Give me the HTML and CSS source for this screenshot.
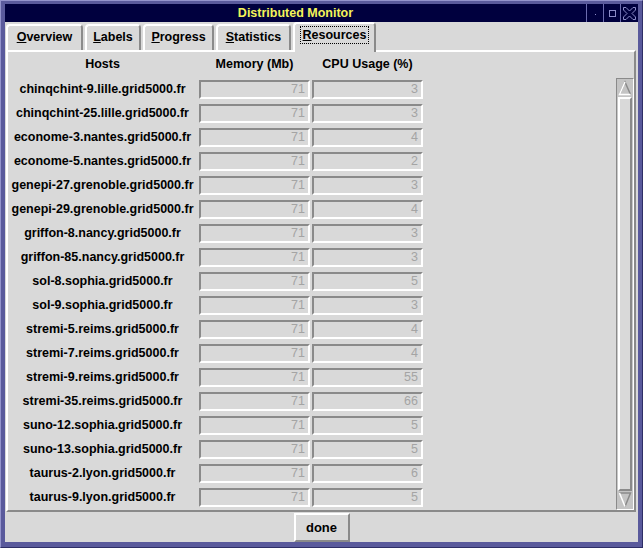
FILE: index.html
```html
<!DOCTYPE html>
<html>
<head>
<meta charset="utf-8">
<title>Distributed Monitor</title>
<link rel="stylesheet" href="styles.css">
</head>
<body>
<div class="frame">
  <div class="titlebar">
    <div class="title">Distributed Monitor</div>
    <div class="wbtn"><svg width="16" height="16" viewBox="0 0 16 16"><rect x="8" y="9" width="1" height="1" fill="#8c8cc8"/></svg></div>
    <div class="wbtn"><svg width="16" height="16" viewBox="0 0 16 16"><rect x="5.5" y="5.5" width="6" height="6" fill="none" stroke="#8c8cc8" stroke-width="1"/></svg></div>
    <div class="wbtn last"><svg width="17" height="16" viewBox="0 0 17 16"><polygon points="2.5,2.5 5,2.5 8.5,6 12,2.5 14.5,2.5 14.5,5 11,8.5 14.5,12 14.5,14.5 12,14.5 8.5,11 5,14.5 2.5,14.5 2.5,12 6,8.5 2.5,5" fill="none" stroke="#8c8cc8" stroke-width="1"/></svg></div>
  </div>
  <div class="client">
    <div class="tabs">
      <div class="tab w1"><span><u>O</u>verview</span></div>
      <div class="tab w2"><span><u>L</u>abels</span></div>
      <div class="tab w3"><span><u>P</u>rogress</span></div>
      <div class="tab w4"><span><u>S</u>tatistics</span></div>
      <div class="tab w5 selected"><span class="focus"><u>R</u>esources</span></div>
    </div>
    <div class="panel">
      <div class="table">
        <div class="grid">
          <div class="head">Hosts</div><div class="head">Memory (Mb)</div><div class="head">CPU Usage (%)</div>
        </div>
        <div class="grid rows" id="rows">
          <div class="host">chinqchint-9.lille.grid5000.fr</div><div class="field">71</div><div class="field">3</div>
          <div class="host">chinqchint-25.lille.grid5000.fr</div><div class="field">71</div><div class="field">3</div>
          <div class="host">econome-3.nantes.grid5000.fr</div><div class="field">71</div><div class="field">4</div>
          <div class="host">econome-5.nantes.grid5000.fr</div><div class="field">71</div><div class="field">2</div>
          <div class="host">genepi-27.grenoble.grid5000.fr</div><div class="field">71</div><div class="field">3</div>
          <div class="host">genepi-29.grenoble.grid5000.fr</div><div class="field">71</div><div class="field">4</div>
          <div class="host">griffon-8.nancy.grid5000.fr</div><div class="field">71</div><div class="field">3</div>
          <div class="host">griffon-85.nancy.grid5000.fr</div><div class="field">71</div><div class="field">3</div>
          <div class="host">sol-8.sophia.grid5000.fr</div><div class="field">71</div><div class="field">5</div>
          <div class="host">sol-9.sophia.grid5000.fr</div><div class="field">71</div><div class="field">3</div>
          <div class="host">stremi-5.reims.grid5000.fr</div><div class="field">71</div><div class="field">4</div>
          <div class="host">stremi-7.reims.grid5000.fr</div><div class="field">71</div><div class="field">4</div>
          <div class="host">stremi-9.reims.grid5000.fr</div><div class="field">71</div><div class="field">55</div>
          <div class="host">stremi-35.reims.grid5000.fr</div><div class="field">71</div><div class="field">66</div>
          <div class="host">suno-12.sophia.grid5000.fr</div><div class="field">71</div><div class="field">5</div>
          <div class="host">suno-13.sophia.grid5000.fr</div><div class="field">71</div><div class="field">5</div>
          <div class="host">taurus-2.lyon.grid5000.fr</div><div class="field">71</div><div class="field">6</div>
          <div class="host">taurus-9.lyon.grid5000.fr</div><div class="field">71</div><div class="field">5</div>
        </div>
      </div>
      <div class="scrollbar">
        <div class="arrow"><svg width="16" height="18" viewBox="0 0 16 18"><polyline points="2.5,15.5 8,3 13.5,15.5" fill="none" stroke="#8a8a8a" stroke-width="1.5"/><polyline points="8,3 2.5,15.5 13.5,15.5" fill="none" stroke="#ffffff" stroke-width="1.5"/></svg></div>
        <div class="thumb"></div>
        <div class="arrow"><svg width="16" height="18" viewBox="0 0 16 18"><polyline points="2.5,2 13.5,2 8,15.5" fill="none" stroke="#8a8a8a" stroke-width="1.5"/><polyline points="2.5,2 8,15.5" fill="none" stroke="#ffffff" stroke-width="1.5"/></svg></div>
      </div>
    </div>
    <div class="footer">
      <div class="button">done</div>
    </div>
  </div>
</div>
</body>
</html>
```

FILE: styles.css
```css
html, body {
  margin: 0;
  padding: 0;
}
body {
  width: 643px;
  height: 548px;
  overflow: hidden;
  background: #5a5a9c;
  font-family: "Liberation Sans", Arial, sans-serif;
}
.frame {
  box-sizing: border-box;
  width: 643px;
  height: 548px;
  background: #5a5a9c;
  border: 1px solid;
  border-color: #9494cc #2e2e66 #2e2e66 #9494cc;
  padding: 3px 4px 5px 4px;
  display: flex;
  flex-direction: column;
}
.titlebar {
  height: 18px;
  background: #00003e;
  display: flex;
  align-items: stretch;
}
.title {
  flex: 1;
  text-align: center;
  color: #f4f45a;
  font-weight: bold;
  font-size: 12.5px;
  line-height: 18px;
}
.wbtn {
  width: 16px;
  border-left: 1px solid #6c6cae;
  display: flex;
  align-items: center;
  justify-content: center;
  background: #00003e;
}
.wbtn.last {
  width: 17px;
}
.client {
  height: 520px;
  background: #d9d9d9;
  display: flex;
  flex-direction: column;
}
.tabs {
  height: 28px;
  display: flex;
  align-items: flex-end;
  padding-left: 1px;
}
.tab {
  box-sizing: border-box;
  height: 26px;
  margin-right: 2px;
  border-top: 2px solid #ffffff;
  border-left: 2px solid #ffffff;
  border-right: 2px solid #8a8a8a;
  border-radius: 4px 4px 0 0;
  background: #d9d9d9;
  padding-bottom: 2px;
  display: flex;
  align-items: center;
  justify-content: center;
  font-weight: bold;
  font-size: 12.5px;
  color: #000;
}
.w1 { width: 77px; }
.w2 { width: 56px; }
.w3 { width: 71px; }
.w4 { width: 75px; }
.w5 { width: 83px; }
.tab.selected {
  height: 30px;
  margin-bottom: -2px;
  padding-bottom: 6px;
  position: relative;
  z-index: 1;
}
.focus {
  border: 1px dotted #000;
  padding: 1px 2px;
  line-height: 14px;
}
.panel {
  box-sizing: border-box;
  height: 462px;
  margin: 0 2px 0 1px;
  border: 2px solid;
  border-color: #ffffff #8a8a8a #8a8a8a #ffffff;
  display: flex;
  overflow: hidden;
}
.table {
  flex: 1;
  padding-top: 4px;
}
.grid {
  display: grid;
  grid-template-columns: 189px 111px 111px;
  column-gap: 2px;
}
.head {
  height: 16px;
  line-height: 16px;
  text-align: center;
  font-weight: bold;
  font-size: 12.5px;
  color: #000;
}
.rows {
  margin-top: 8px;
  row-gap: 5px;
}
.host {
  height: 19px;
  line-height: 19px;
  text-align: center;
  font-weight: bold;
  font-size: 12.5px;
  color: #000;
  white-space: nowrap;
}
.field {
  box-sizing: border-box;
  height: 19px;
  border: 2px solid;
  border-color: #8a8a8a #ffffff #ffffff #8a8a8a;
  text-align: right;
  padding-right: 3px;
  line-height: 15px;
  font-size: 12.5px;
  color: #a4a4a4;
}
.scrollbar {
  box-sizing: border-box;
  width: 18px;
  margin-top: 26px;
  height: 432px;
  border: 1px solid;
  border-color: #8a8a8a #ffffff #ffffff #8a8a8a;
  display: flex;
  flex-direction: column;
  background: #c8c8c8;
}
.arrow {
  height: 18px;
  display: flex;
  align-items: center;
  justify-content: center;
  background: #c4c4c4;
}
.thumb {
  flex: 1;
  box-sizing: border-box;
  margin: 0 1px;
  border: 2px solid;
  border-color: #ffffff #8a8a8a #8a8a8a #ffffff;
  background: #d9d9d9;
}
.footer {
  flex: 1;
  display: flex;
  justify-content: center;
  align-items: flex-start;
  padding-top: 1px;
}
.button {
  box-sizing: border-box;
  width: 56px;
  height: 29px;
  border: 2px solid;
  border-color: #ffffff #8a8a8a #8a8a8a #ffffff;
  display: flex;
  align-items: center;
  justify-content: center;
  font-weight: bold;
  font-size: 13px;
  color: #000;
}
```
